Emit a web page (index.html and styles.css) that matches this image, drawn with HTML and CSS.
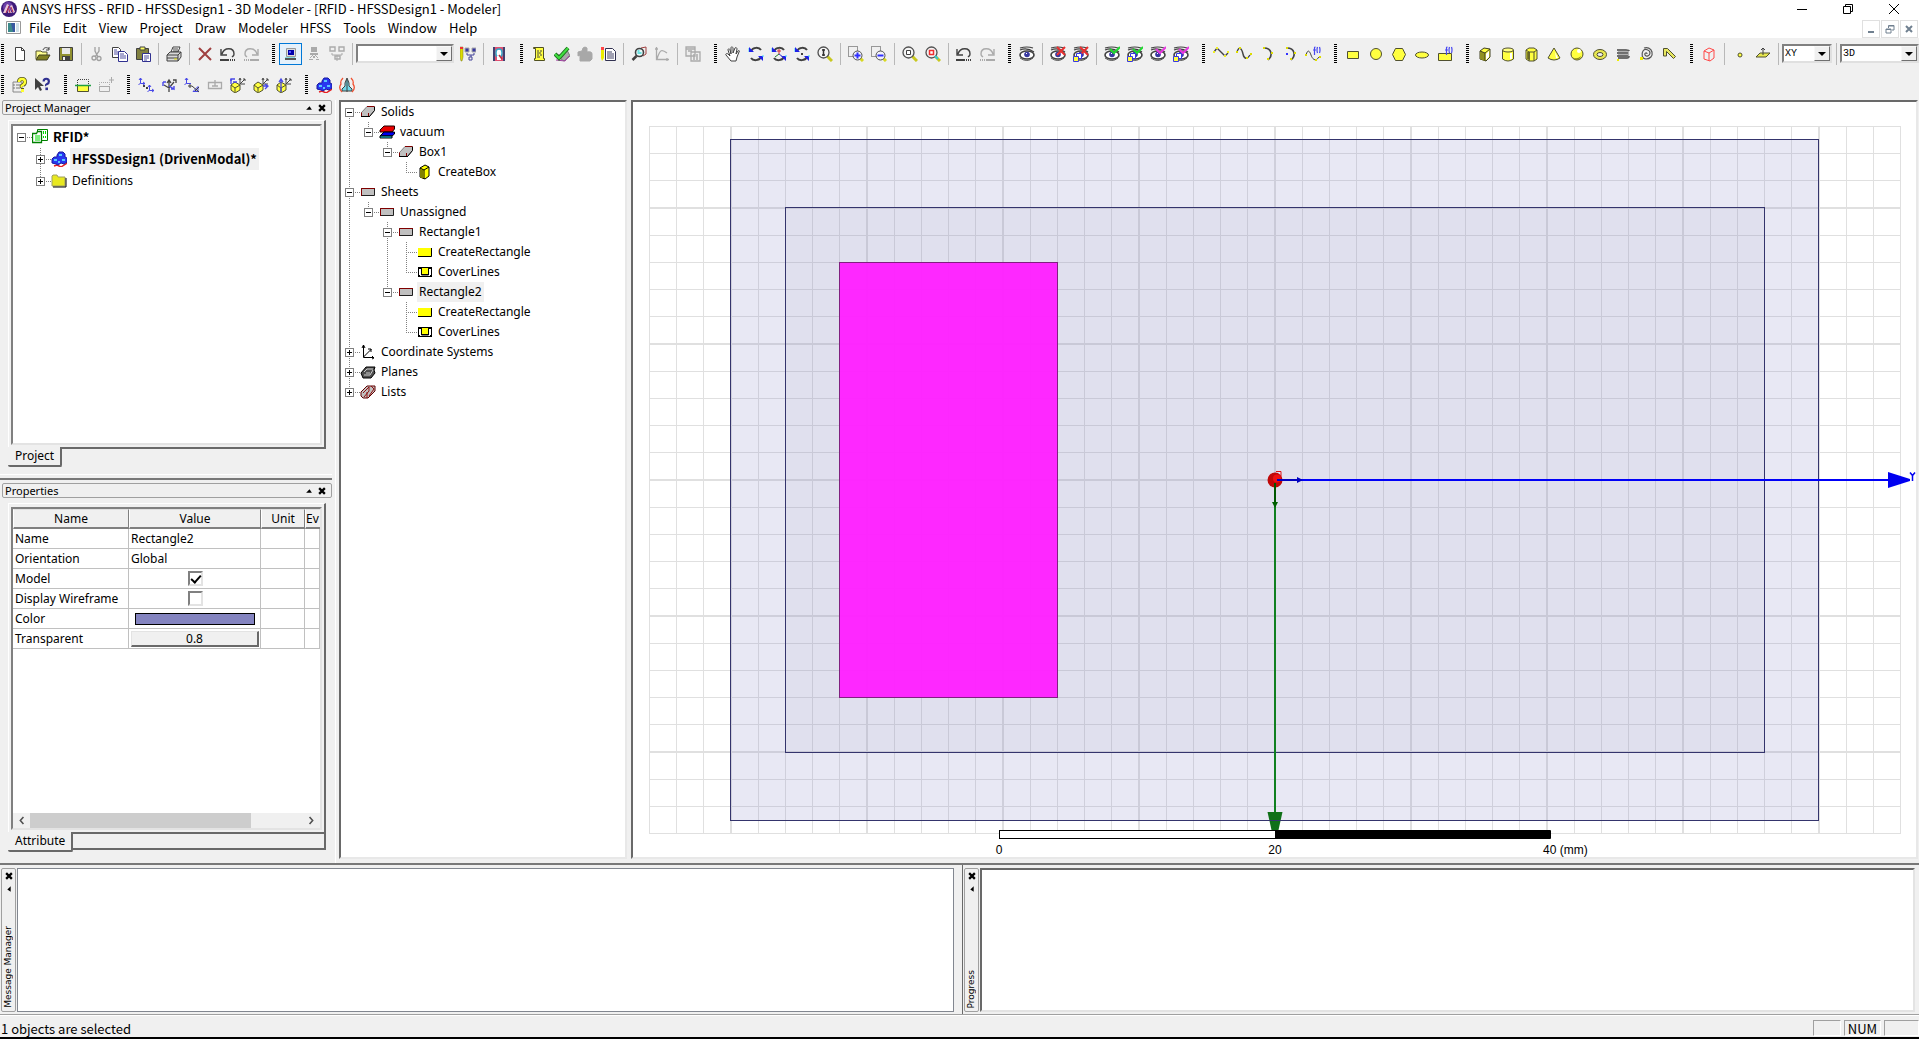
FILE: index.html
```html
<!DOCTYPE html>
<html lang="en">
<head>
<meta charset="utf-8">
<title>ANSYS HFSS - RFID - HFSSDesign1 - 3D Modeler</title>
<link rel="stylesheet" href="styles.css">
</head>
<body>
<svg class="defs" aria-hidden="true">
  <symbol id="logo" viewBox="0 0 16 16"><circle cx="8" cy="8" r="8" fill="#3d1a78"/><circle cx="7" cy="6" r="5" fill="#6b3fa8"/><path d="M2 12 6 3l2 1-3 8zM7 12l1-5 3 5zM9 5l2-1 3 7-2 1z" fill="#e8c8d8"/><path d="M5 12 8 5M9 12 8 8M12 11 10 6" stroke="#b02848" fill="none"/></symbol>
  <symbol id="doc" viewBox="0 0 16 14"><path d="M.5.5h14v12H.5z" fill="#fff" stroke="#999"/><path d="M2 2h7v9H2z" fill="#3c8a8a"/><path d="M5 2h4v9H7z" fill="#3858a0"/><path d="M10 2h3v9h-3z" fill="#cfe0e8"/></symbol>
  <symbol id="new" viewBox="0 0 16 16"><path d="M3.5 1.5h6l3 3v10h-9z" fill="#fff" stroke="#404040"/><path d="M9.500 1.500v3h3" fill="none" stroke="#404040"/></symbol>
  <symbol id="open" viewBox="0 0 16 16"><path d="M1 13V5h5l1 1h5v3" fill="#ffff90" stroke="#505030"/><path d="m1 14 3-5h11l-3 5z" fill="#808020" stroke="#404020"/><path d="M8 4c1-3 4-3 6-1m0-2v3h-3" fill="none" stroke="#404040"/></symbol>
  <symbol id="save" viewBox="0 0 16 16"><path d="M1.500 1.500h13v13h-13z" fill="#909030" stroke="#404040"/><path d="M4 2h8v6H4z" fill="#e8e8e8"/><path d="M4 10h8v4H4z" fill="#404040"/><path d="M5 11h2v3H5z" fill="#eee"/></symbol>
  <symbol id="cut" viewBox="0 0 16 16"><g fill="none" stroke="#a0a0a0" stroke-width="1.300"><path d="M6 1v4l3 6M10 1v4l-4 6"/><circle cx="5" cy="12" r="2"/><circle cx="10" cy="12.500" r="2"/></g></symbol>
  <symbol id="copy" viewBox="0 0 16 16"><path d="M.5 1.500h6l2 2v8h-8z" fill="#fff" stroke="#404040"/><path d="M6.500 5.500h6l3 3v7h-9z" fill="#fff" stroke="#303090"/><path d="M2 4h3M2 6h4M2 8h4M8 8h4M8 10h6M8 12h6" stroke="#5050a0"/></symbol>
  <symbol id="paste" viewBox="0 0 16 16"><path d="M1.500 2.500h12v11h-12z" fill="#808040" stroke="#404040"/><path d="M5 1h5v3H5z" fill="#ffff60" stroke="#404040"/><path d="M7.500 7.500h8v8h-8z" fill="#fff" stroke="#303090"/><path d="M9 10h5M9 12h5M9 14h3" stroke="#5050a0"/></symbol>
  <symbol id="print" viewBox="0 0 16 16"><path d="M5 6 7 1h7l-2 5z" fill="#fff" stroke="#404040"/><path d="m1 9 3-3h11v5l-3 4H1z" fill="#d8d8d8" stroke="#404040"/><path d="M1 9h11v6M12 9l3-3M1 12h11M7 3h5M7 5h5" fill="none" stroke="#404040"/><path d="M8 13h3" stroke="#dd0"/></symbol>
  <symbol id="delete" viewBox="0 0 16 16"><path d="M2 2 14 14M14 2 2 14" stroke="#a04040" stroke-width="2"/></symbol>
  <symbol id="undo" viewBox="0 0 16 16"><path d="M2 8c2-7 12-7 12 0 0 2-1 2-2 3M1 3v6h6" fill="none" stroke="currentColor" stroke-width="1.400"/><path d="M0 14h9m1 0h1m1 0h1m1 0h1" stroke="currentColor" stroke-width="2"/></symbol>
  <symbol id="redo" viewBox="0 0 16 16"><g transform="matrix(-1 0 0 1 16 0)"><use href="#undo" width="16" height="16"/></g></symbol>
  <symbol id="pc" viewBox="0 0 16 16"><path d="M3.500 2.500h9v8h-9z" fill="#ddd" stroke="#999"/><path d="M5 4h6v5H5z" fill="#00a"/><path d="M6 5h2v2H6z" fill="#55f"/><path d="M2 12h11v2H2z" fill="#555"/><path d="M2 11h10v1H2z" fill="#8dd"/></symbol>
  <symbol id="remote" viewBox="0 0 16 16"><path d="M5 1h6v5H5zM4 7h8v2H4zM7 10h2v2H7zM3 13h4v1H3zM10 13h3v1h-3z" fill="#aaa"/><path d="m4 12 3-3m5 3-3-3" stroke="#aaa"/></symbol>
  <symbol id="dist" viewBox="0 0 16 16"><path d="M1 1h5v4H1zM10 1h5v4h-5zM6 10h5v3H6z" fill="none" stroke="currentColor" stroke-width="1.400"/><path d="M3 7v2h10V7M8 9v6" fill="none" stroke="currentColor"/></symbol>
  <symbol id="distedit" viewBox="0 0 16 16"><path d="M0 1h3v10l-1 4H1l-1-4z" fill="#dd0" stroke="#772" stroke-width=".5"/><path d="M0 1h3v2H0z" fill="#e33"/><path d="M5 2h4v4H5zM12 2h4v4h-4z" fill="#3838a0" stroke="#aaa"/><path d="M7 7v2h7V7m-3 2v2M9 11h3v3H9z" fill="none" stroke="#449"/></symbol>
  <symbol id="queue" viewBox="0 0 16 16"><path d="M2 1h12v14H2z" fill="#404070"/><path d="M4 1h8v14H4z" fill="#e05070"/><rect x="5" y="3" width="6" height="8" rx="3" fill="#fff" stroke="#30a8c8" stroke-width="1.500"/><path d="M6 10h4v4H6z" fill="#fff"/><path d="m8 9 3 4" stroke="#c03040" stroke-width="1.500"/></symbol>
  <symbol id="script" viewBox="0 0 16 16"><path d="M2.500 1.500h10v11h1v2h-10v-2h1v-10h-2z" fill="#ffff40" stroke="#505020"/><path d="M6 5h2m1 0h2M6 7h4M6 9h2m1 0h2M6 11h3" stroke="#444"/></symbol>
  <symbol id="check" viewBox="0 0 16 16"><path d="m1 9 5 0 7-5 3 6-6 5z" fill="#aaa" stroke="#777"/><path d="m2 14 9 1 4-5" stroke="#a040a0" fill="none"/><path d="m1 8 4 4L14 2" fill="none" stroke="#207020" stroke-width="4"/><path d="m1 8 4 4L14 2" fill="none" stroke="#40e040" stroke-width="2"/></symbol>
  <symbol id="analyze" viewBox="0 0 16 16"><path d="M6 2q2-2 4 0v4q5-1 5 2v5l-2 2H3V9l-2 1V6l4-1z" fill="#a8a8a8" stroke="#a8a8a8" stroke-linejoin="round"/></symbol>
  <symbol id="notes" viewBox="0 0 16 16"><path d="M5.500 2.500h7l3 3v9h-10z" fill="#fff" stroke="#303050"/><path d="M7 6h5M7 8h7M7 10h7M7 12h7" stroke="#446"/><path d="M1 1h3v11l-2 3-1-3z" fill="#ee0"/><path d="M1 1h3v3H1z" fill="#f44"/></symbol>
  <symbol id="find" viewBox="0 0 16 16"><path d="m10 2 5-1v7l-3 2" fill="none" stroke="#a04040"/><circle cx="8.500" cy="6.500" r="4" fill="#e8f8f8" stroke="#404040" stroke-width="1.600"/><path d="m5.500 10-4 4" stroke="#404040" stroke-width="2.500"/><path d="M6.500 5h2M6.500 7h4" stroke="#40d8d8" stroke-width="1.500"/></symbol>
  <symbol id="plot" viewBox="0 0 16 16"><path d="M2.500 1v12.500H15M3 13c3-10 5-10 10-6M1 3h3M13 12v3" fill="none" stroke="#aaa" stroke-width="1.300"/></symbol>
  <symbol id="report" viewBox="0 0 16 16"><g fill="#eee" stroke="#aaa" stroke-width="1.300"><path d="M1 1h9v9H1zM6 6h9v9H6z"/><path d="M1 3h9M3 5h4M8 9h2m1 0h2M8 11h2m1 0h2M8 13h2m1 0h2"/></g></symbol>
  <symbol id="hand" viewBox="0 0 16 16"><path d="M6 15 1 9c-1-1 1-2 2-1l2 2-2-6c0-2 2-1 2 0l1 4V2c0-2 2-1 2 0v5l2-5c1-1 2 0 2 1l-1 5 2-3c1-1 2 0 1 1l-2 5-1 4z" fill="#fff" stroke="#404040"/></symbol>
  <symbol id="rot" viewBox="0 0 16 16"><path d="M3 5c2-4 8-4 10-1M13 11c-2 4-8 4-10 1" fill="none" stroke="#404040" stroke-width="2"/><path d="M1 1v5h5zM15 15v-5h-5z" fill="#2020e8"/><path d="M0 2v4M15 9v2" stroke="#40d8f8"/></symbol>
  <symbol id="rotaxis" viewBox="0 0 16 16"><use href="#rot" width="16" height="16"/><path d="M8 3v5M6 5h4" stroke="#d03030"/><path d="m8 8 4 3" stroke="#3030d0"/><path d="m8 8-4 3" stroke="#208020"/></symbol>
  <symbol id="rotdot" viewBox="0 0 16 16"><use href="#rot" width="16" height="16"/><path d="M7 7h2v2H7z" fill="#404040"/></symbol>
  <symbol id="lens" viewBox="0 0 16 16"><path d="m10 10 5 5" stroke="#c8c820" stroke-width="3"/><circle cx="6.500" cy="6.500" r="5.500" fill="#f4f4f4" stroke="#505050" stroke-width="1.300"/></symbol>
  <symbol id="zoomdyn" viewBox="0 0 16 16"><use href="#lens" width="16" height="16"/><path d="M6.500 3v7M5 4h3M5 9h3" stroke="#333" stroke-width="1.500"/></symbol>
  <symbol id="lensbox" viewBox="0 0 16 16"><path d="M.5.500h9v10h-9z" fill="none" stroke="#404040" stroke-dasharray="1 1"/><path d="m12 12 3 3" stroke="#d8d820" stroke-width="3"/><circle cx="9.500" cy="9.500" r="4.500" fill="#f0f0f8" stroke="#505050"/></symbol>
  <symbol id="zoomin" viewBox="0 0 16 16"><use href="#lensbox" width="16" height="16"/><path d="M6.500 9.500h6m-3-3v6" stroke="#3030ff" stroke-width="2"/></symbol>
  <symbol id="zoomout" viewBox="0 0 16 16"><use href="#lensbox" width="16" height="16"/><path d="M6.500 9.500h6" stroke="#3030ff" stroke-width="2"/></symbol>
  <symbol id="fitall" viewBox="0 0 16 16"><use href="#lens" width="16" height="16"/><path d="M4.500 4.500h4v4h-4z" fill="#fff" stroke="#404040"/></symbol>
  <symbol id="fitsel" viewBox="0 0 16 16"><use href="#lens" width="16" height="16"/><path d="M4.500 4.500h4v4h-4z" fill="#fff" stroke="#f03030" stroke-width="1.500"/><path d="m10 10 3 3" stroke="#30c8d8" stroke-width="2"/></symbol>
  <symbol id="eye" viewBox="0 0 16 16"><path d="M1 2q7-2 13 0M1 4q7-3 14 2" fill="none" stroke="#404040" stroke-width="1.200"/><ellipse cx="8" cy="9" rx="7" ry="4" fill="#fff" stroke="#404040" stroke-width="1.600"/><path d="M1 12q7 5 13 0" fill="none" stroke="#555"/><circle cx="8" cy="8.500" r="2.800" fill="#3838a0"/><path d="M7 7h1v1H7z" fill="#fff"/></symbol>
  <symbol id="boxes" viewBox="0 0 16 16"><path d="M3.500 7.500h5v5h-5z" fill="#fff" stroke="#3838e0"/><path d="M.5 10.500h5v5h-5z" fill="#ffff40" stroke="#3838e0"/></symbol>
  <symbol id="hide" viewBox="0 0 16 16"><use href="#eye" width="16" height="16"/><path d="m7 1 8 8m0-8L7 9" stroke="#e83030" stroke-width="2"/></symbol>
  <symbol id="hideb" viewBox="0 0 16 16"><use href="#hide" width="16" height="16"/><use href="#boxes" width="16" height="16"/></symbol>
  <symbol id="show" viewBox="0 0 16 16"><use href="#eye" width="16" height="16"/><path d="m6 3 4 4 6-6" fill="none" stroke="currentColor" stroke-width="2"/></symbol>
  <symbol id="showb" viewBox="0 0 16 16"><use href="#show" width="16" height="16"/><use href="#boxes" width="16" height="16"/></symbol>
  <symbol id="line" viewBox="0 0 16 16"><path d="M1 6 4 2l8 8 3-3" fill="none" stroke="#444" stroke-width="1.400"/><path d="M0 5h2v2H0zM3 1h2v2H3zM11 9h2v2h-2zM14 5h2v2h-2z" fill="#ee2"/></symbol>
  <symbol id="spline" viewBox="0 0 16 16"><path d="M1 6c2-7 5-3 6 2s4 6 7 1" fill="none" stroke="#444" stroke-width="1.400"/><path d="M0 5h2v2H0zM3 1h2v2H3zM10 11h2v2h-2zM14 7h2v2h-2z" fill="#dd0"/></symbol>
  <symbol id="arc3" viewBox="0 0 16 16"><path d="M5 2c8 0 9 8 4 12" fill="none" stroke="#444" stroke-width="1.600"/><path d="M4 1h2v2H4zM12 6h2v2h-2zM8 12h2v2H8z" fill="#dd0"/></symbol>
  <symbol id="arcc" viewBox="0 0 16 16"><use href="#arc3" width="16" height="16"/><path d="M4 7h2v2H4z" fill="#33f"/></symbol>
  <symbol id="fx" viewBox="0 0 16 16"><path d="M9.500 9V2q0-1 1-1M8 4h3M12.500 1q-1 3 0 6m2-6q1 3 0 6" fill="none" stroke="#4848f0" stroke-width="1.200"/></symbol>
  <symbol id="eqcurve" viewBox="0 0 16 16"><path d="M1 9c2-7 4-3 5 0s4 8 8 2" fill="none" stroke="#444"/><path d="M0 8h2v2H0zM10 13h2v2h-2zM14 10h2v2h-2z" fill="#dd0"/><use href="#fx" width="16" height="16"/></symbol>
  <symbol id="srect" viewBox="0 0 16 16"><path d="M2.500 5.500h11v7h-11z" fill="#ffff40" stroke="#505030"/></symbol>
  <symbol id="scirc" viewBox="0 0 16 16"><circle cx="8" cy="8" r="5.500" fill="#ffff40" stroke="#505030"/></symbol>
  <symbol id="spoly" viewBox="0 0 16 16"><path d="m1.500 8.500 3-6h7l3 6-3 6h-7z" fill="#ffff40" stroke="#505030"/></symbol>
  <symbol id="sell" viewBox="0 0 16 16"><ellipse cx="8" cy="9" rx="6.500" ry="3" fill="#ffff40" stroke="#505030"/></symbol>
  <symbol id="eqsurf" viewBox="0 0 16 16"><path d="M1.500 7.500h13v7h-13z" fill="#ffff40" stroke="#505030"/><use href="#fx" width="16" height="16"/></symbol>
  <symbol id="box" viewBox="0 0 16 16"><path d="m3 5 4-3 6 1v8l-4 4-6-2z" fill="#ffff40" stroke="#404020"/><path d="m3 5 5 2v8L3 13z" fill="#909020"/><path d="m3 5 5 2 5-4M8 7v8" fill="none" stroke="#404020"/><path d="m9 8 3-3v6l-3 3z" fill="#fff"/></symbol>
  <symbol id="cbox" viewBox="0 0 16 16"><path d="m3 4 5-3 4 2v9l-4 3-5-2z" fill="#ff0" stroke="#000"/><path d="m3 5 3 1v9l-3-2z" fill="#808000"/><path d="m3 4 4 2 5-3M7 6v9" fill="none" stroke="#000"/></symbol>
  <symbol id="cyl" viewBox="0 0 16 16"><path d="M2.500 4v9q5.500 4 11 0V4" fill="#ffff40" stroke="#505030"/><ellipse cx="8" cy="4" rx="5.500" ry="2" fill="#ffff80" stroke="#505030"/><path d="M10 7h2v6h-2z" fill="#fff"/></symbol>
  <symbol id="prism" viewBox="0 0 16 16"><path d="m3 4 3-2h5l3 2v9l-3 2H6l-3-2z" fill="#ffff40" stroke="#505030"/><path d="M4 6h3v8l-3-1z" fill="#808020"/><path d="m3 4 3 2h5l3-2M6 6v9m5-9v9" fill="none" stroke="#505030"/></symbol>
  <symbol id="cone" viewBox="0 0 16 16"><path d="m8 2 6 10q-6 4-12 0z" fill="#ffff40" stroke="#505030"/><path d="m9 6 3 6h-2z" fill="#fff"/></symbol>
  <symbol id="sphere" viewBox="0 0 16 16"><circle cx="8" cy="8" r="6" fill="#ffff40" stroke="#505030"/><path d="M3 11q5 3 9-1-1 4-5 4z" fill="#909020"/><circle cx="10" cy="5" r="2" fill="#fff"/></symbol>
  <symbol id="torus" viewBox="0 0 16 16"><ellipse cx="8" cy="8.500" rx="6.500" ry="5" fill="#e8e850" stroke="#505030"/><ellipse cx="8" cy="8.500" rx="3" ry="2" fill="#f0f0f0" stroke="#505030"/></symbol>
  <symbol id="helix" viewBox="0 0 16 16"><path d="M2 4h9q3 0 3 1M2 7h11M2 10h11M3 12h9q2 0 2-2" fill="none" stroke="#444" stroke-width="1.500"/><path d="M13 4v8M3 5h9M3 8h9" stroke="#777"/><path d="M2 13h2v2H2z" fill="#ee0"/></symbol>
  <symbol id="spiral" viewBox="0 0 16 16"><path d="M9 8c0-2-3-1-2 1s5 1 5-2-5-5-7-2-1 8 3 8 7-3 6-7-5-5-8-4" fill="none" stroke="#555" stroke-width="1.200"/><path d="M2 11h3v3H2z" fill="#ee0"/></symbol>
  <symbol id="sweep" viewBox="0 0 16 16"><path d="M2.500 10V2.500h4l8 8-2 2-7-7V10z" fill="#e8e860" stroke="#505030"/></symbol>
  <symbol id="region" viewBox="0 0 16 16"><path d="m3 5 5-3 5 2v8l-4 3-6-2zM3 5l5 2 5-3M8 7v8" fill="none" stroke="#ff4848"/></symbol>
  <symbol id="point" viewBox="0 0 16 16"><circle cx="8" cy="9" r="2" fill="#ffff40" stroke="#505030"/></symbol>
  <symbol id="plane" viewBox="0 0 16 16"><path d="m1 11 4-4h10l-4 4z" fill="#e8e850" stroke="#505030"/><path d="M8 9V2M6 4l2-2 2 2" fill="none" stroke="#404040"/></symbol>
  <symbol id="q" viewBox="0 0 16 16"><path d="M7 5q0-3 3-3t3 3q0 2-2 3t-1 2" fill="none" stroke="currentColor" stroke-width="2.500"/><path d="M9 12h3v3H9z" fill="currentColor"/></symbol>
  <symbol id="help" viewBox="0 0 16 16"><path d="M1 5h9v10H1z" fill="#eee" stroke="#888"/><path d="M1 8h2M1 11h2M4 8h4m-4 3h4" stroke="#777"/><path d="M7 5q0-3 3-3t3 3q0 2-2 3t-1 2M9 13h3" fill="none" stroke="#555520" stroke-width="4"/><g color="#ffff30"><use href="#q" width="16" height="16"/></g></symbol>
  <symbol id="what" viewBox="0 0 16 16"><path d="M0 1v12l3-3 2 4 2-1-2-4h4z" fill="#404040"/><g color="#303090"><use href="#q" x="2" width="15" height="14"/></g></symbol>
  <symbol id="sec" viewBox="0 0 16 16"><path d="M2.500 8V2.500h11V8" fill="none" stroke="#404040" stroke-dasharray="1 1"/><path d="M2.500 8.500h11v6h-11z" fill="#ffff40" stroke="#505030"/><path d="M0 8.500h16" stroke="#20a040" stroke-width="1.500"/></symbol>
  <symbol id="secoff" viewBox="0 0 16 16"><path d="M1.500 10V5.500h10V10" fill="none" stroke="#aaa" stroke-dasharray="1 1"/><path d="M1.500 9.500h10v5h-10zM11 3h5m-2.500-3v6" fill="none" stroke="#aaa"/></symbol>
  <symbol id="cs1" viewBox="0 0 16 16"><path d="M2.500 1v5.500H7M2.500 6.500l-2 1M11.500 8v5.500H16m-4.500 0-2 1M1 3l1.500-2L4 3m1 2 2 1.500L5 8m5 2 1.500-2 1.500 2m1 2 2 1.500-2 1.500" fill="none" stroke="#4848e8"/><path d="M5 8h2v2H5zM8 10h2v2H8z" fill="#404040"/></symbol>
  <symbol id="cs2" viewBox="0 0 16 16"><path d="M8 15V4M3 8l5 3 5-6M6 6l2-3 2 3M12 3h3v3" fill="none" stroke="#444" stroke-width="1.300"/><path d="M2 5h3m-3 0v4M8 9l5 3v-3m0 3h-3" fill="none" stroke="#4848e8" stroke-width="1.400"/></symbol>
  <symbol id="cs3" viewBox="0 0 16 16"><path d="M2.500 1v5.500H7M.5 7.500l2-1M1 3l1.500-2L4 3M9 14.500l5-5v5z" fill="none" stroke="#4848e8"/><path d="M5 8h2v2H5zM8 9l7 6m0-5-4 4" fill="none" stroke="#404040"/></symbol>
  <symbol id="cs4" viewBox="0 0 16 16"><path d="M1.500 5.500h13v6h-13zM8 3v6M5 9h6" fill="none" stroke="#aaa" stroke-width="1.300"/></symbol>
  <symbol id="csf" viewBox="0 0 16 16"><path d="m1 8 4-3 5 3v5l-5 3-4-3z" fill="#ffff40" stroke="#505030"/><path d="m1 8 4 3 5-3M5 11v4" fill="none" stroke="#505030"/><path d="M10 7V2m0 5h5m-5 0 5-5M9 3l1-2 1 2m2-1h2v2" fill="none" stroke="#444"/></symbol>
  <symbol id="csf1" viewBox="0 0 16 16"><use href="#csf" width="16" height="16"/><path d="M1 7V2h4M0 3h2m1 2h4" fill="none" stroke="#4848e8" stroke-width="1.300"/></symbol>
  <symbol id="csf2" viewBox="0 0 16 16"><use href="#csf" width="16" height="16"/><path d="M10 9h5m-3-2 3 2-3 3" fill="none" stroke="#4848e8" stroke-width="1.300"/></symbol>
  <symbol id="csf3" viewBox="0 0 16 16"><use href="#csf" width="16" height="16"/><path d="M5 15V3M3 5l2-3 2 3" fill="none" stroke="#4848e8" stroke-width="1.300"/></symbol>
  <symbol id="hfss" viewBox="0 0 16 16"><path d="m3 15 3-1 4 2 6-4V7" fill="none" stroke="#e82020" stroke-width="1.500"/><path d="m6 4 2-3h4l2 2v3l2 1v4l-3 2-3-1-3 2-2-1-4-1V8l2-2h3z" fill="#2838f0" stroke="#1818a0"/><path d="M8 3h3v2H8zM3 8h3v2H3zM11 8h3v2h-3zM7 10h2v2H7z" fill="#58c8ff"/></symbol>
  <symbol id="antenna" viewBox="0 0 16 16"><path d="m8 1 2 5v3l3 3v2H3v-2l3-3V6z" fill="#70d8e8" stroke="#404040"/><path d="M8 3v12" stroke="#404040"/><path d="M4 1Q1 4 2 7q-3 4 1 8M12 1q3 3 2 6 3 4-1 8" fill="none" stroke="#f05030" stroke-width="1.300"/></symbol>
  <symbol id="proj" viewBox="0 0 16 16"><path d="M5.500.500h10v11h-10z" fill="#fff" stroke="#008000"/><path d="M.5 4.500h4l1-2h4v11h-9z" fill="#fff" stroke="#008000" stroke-width="1.300"/><path d="M11.500 2v3m2-3v3m-2 2v2m2-2v2M3 7h5M3 9h5M3 11h5" stroke="#0d0"/></symbol>
  <symbol id="folder" viewBox="0 0 16 16"><path d="M1 13V3l1-1h4l1 2h7v9z" fill="#e8e820" stroke="#a0a060"/><path d="M2 14h13V5" fill="none" stroke="#000"/></symbol>
  <symbol id="solid" viewBox="0 0 16 16"><path d="M1.500 8.500 7 2.500h7.500v4l-5 6h-8z" fill="#c0c0c0" stroke="#808080"/><path d="M7 2.500h7.500M8.500 12V9M1.500 12V8.500" fill="none" stroke="#800000"/><path d="m9.500 12.500 5-6V3M1 12.500h9" fill="none" stroke="#000"/></symbol>
  <symbol id="mat" viewBox="0 0 16 16"><path d="m1 6 4-4h10.500v3L13 8H1z" fill="#e80000" stroke="#200000"/><path d="m1 12 4-4h10.500v2L13 12z" fill="#0000f0" stroke="#000"/><path d="M1 12h12v2H1z" fill="#20e0f0" stroke="#000"/></symbol>
  <symbol id="sheet" viewBox="0 0 16 16"><path d="M1.500 4.500h13v7h-13z" fill="#c0c0c0" stroke="#202020"/><path d="M1.500 12V4.500H15" fill="none" stroke="#800000"/></symbol>
  <symbol id="crect" viewBox="0 0 16 16"><path d="M1 4h13v8H1z" fill="#ff0"/><path d="M1 12.500h13.500V4" fill="none" stroke="#000"/></symbol>
  <symbol id="cover" viewBox="0 0 16 16"><path d="M1 3h14v10H1z"/><path d="M2 5h2v6H2zM12 5h2v6h-2zM3 11h10v1H3z" fill="#fff"/><path d="M4 4h8v6H4z" fill="#ff0"/><path d="M4.500 4v7h7V4" fill="none" stroke="#000"/></symbol>
  <symbol id="axes" viewBox="0 0 16 16"><path d="M3.500 1v12.500H14M3.500 13l8-8M2 4l1.500-3L5 4m3 1h3v3m1 4 2 2-2 1" fill="none" stroke="#000"/></symbol>
  <symbol id="planes" viewBox="0 0 16 16"><path d="m1 9 5-6h9l-1 3 1 3-4 5H3z" fill="#505050" stroke="#000"/><path d="m4 8 3-3h6M4 11h6l3-5M6 9h4" stroke="#ccc" fill="none"/></symbol>
  <symbol id="lists" viewBox="0 0 16 16"><path d="m1 8 6-6h8v5l-7 7H3l-2-2z" fill="#c0c0c0" stroke="#600000"/><path d="m3 9 6-6v4L4 13m5-1 5-7-3-3M7 8v6" fill="none" stroke="#901010"/></symbol>
</svg>

<header class="titlebar">
  <svg class="logo"><use href="#logo"/></svg>
  <h1>ANSYS HFSS - RFID - HFSSDesign1 - 3D Modeler - [RFID - HFSSDesign1 - Modeler]</h1>
  <div class="winbtns">
    <button aria-label="Minimize"><svg viewBox="0 0 12 12"><path d="M1 6.500h10"/></svg></button>
    <button aria-label="Restore"><svg viewBox="0 0 12 12"><path d="M1.500 3.500h7v7h-7zM3.500 3.500v-2h7v7h-2"/></svg></button>
    <button aria-label="Close"><svg viewBox="0 0 12 12"><path d="m1 1 10 10M11 1 1 11"/></svg></button>
  </div>
</header>
<nav class="menubar">
  <svg class="docicon"><use href="#doc"/></svg>
  <button>File</button><button>Edit</button><button>View</button><button>Project</button><button>Draw</button><button>Modeler</button><button>HFSS</button><button>Tools</button><button>Window</button><button>Help</button>
  <div class="mdibtns">
    <button aria-label="Minimize document"><svg viewBox="0 0 10 10"><path d="M2 8h6" stroke-width="2"/></svg></button>
    <button aria-label="Restore document"><svg viewBox="0 0 10 10"><path d="M1 5h5v4H1zM1 5.500h5M3.500 4V1.500H9V6H7M4 2h5"/></svg></button>
    <button aria-label="Close document"><svg viewBox="0 0 10 10"><path d="m2 2 6 6m0-6L2 8" stroke-width="2"/></svg></button>
  </div>
</nav>
<div class="toolbar">
  <div class="group">
    <button class="tb" aria-label="New"><svg><use href="#new"/></svg></button><button class="tb" aria-label="Open"><svg><use href="#open"/></svg></button><button class="tb" aria-label="Save"><svg><use href="#save"/></svg></button><i class="sep"></i><button class="tb" aria-label="Cut"><svg><use href="#cut"/></svg></button><button class="tb" aria-label="Copy"><svg><use href="#copy"/></svg></button><button class="tb" aria-label="Paste"><svg><use href="#paste"/></svg></button><i class="sep"></i><button class="tb" aria-label="Print"><svg><use href="#print"/></svg></button><i class="sep"></i><button class="tb" aria-label="Delete"><svg><use href="#delete"/></svg></button><button class="tb" aria-label="Undo"><svg><use href="#undo"/></svg></button><button class="tb off" aria-label="Redo"><svg><use href="#redo"/></svg></button>
  </div>
  <div class="group">
    <button class="tb on" aria-label="Local machine"><svg><use href="#pc"/></svg></button><button class="tb" aria-label="Remote machine"><svg><use href="#remote"/></svg></button><button class="tb off" aria-label="Distributed"><svg><use href="#dist"/></svg></button><i class="sep"></i><span class="combo wide"><select aria-label="Machine list"><option></option></select><span class="arrow"></span></span><button class="tb" aria-label="Edit machine list"><svg><use href="#distedit"/></svg></button><i class="sep"></i><button class="tb" aria-label="Queue"><svg><use href="#queue"/></svg></button>
  </div>
  <div class="group">
    <button class="tb" aria-label="Edit notes"><svg><use href="#script"/></svg></button><button class="tb" aria-label="Validate"><svg><use href="#check"/></svg></button><button class="tb" aria-label="Analyze all"><svg><use href="#analyze"/></svg></button><button class="tb" aria-label="Edit sources"><svg><use href="#notes"/></svg></button><i class="sep"></i><button class="tb" aria-label="Solution data"><svg><use href="#find"/></svg></button><button class="tb" aria-label="Create report"><svg><use href="#plot"/></svg></button><i class="sep"></i><button class="tb" aria-label="Copy report"><svg><use href="#report"/></svg></button>
  </div>
  <div class="group">
    <button class="tb" aria-label="Pan"><svg><use href="#hand"/></svg></button><button class="tb" aria-label="Rotate"><svg><use href="#rot"/></svg></button><button class="tb" aria-label="Rotate about axis"><svg><use href="#rotaxis"/></svg></button><button class="tb" aria-label="Rotate about screen centre"><svg><use href="#rotdot"/></svg></button><button class="tb" aria-label="Zoom"><svg><use href="#zoomdyn"/></svg></button><i class="sep"></i><button class="tb" aria-label="Zoom in"><svg><use href="#zoomin"/></svg></button><button class="tb" aria-label="Zoom out"><svg><use href="#zoomout"/></svg></button><i class="sep"></i><button class="tb" aria-label="Fit all"><svg><use href="#fitall"/></svg></button><button class="tb" aria-label="Fit selection"><svg><use href="#fitsel"/></svg></button><i class="sep"></i><button class="tb" aria-label="Previous view"><svg><use href="#undo"/></svg></button><button class="tb off" aria-label="Next view"><svg><use href="#redo"/></svg></button>
  </div>
  <div class="group">
    <button class="tb" aria-label="Visibility"><svg><use href="#eye"/></svg></button><i class="sep"></i><button class="tb" aria-label="Hide selection"><svg><use href="#hide"/></svg></button><button class="tb" aria-label="Hide selection in active view"><svg><use href="#hideb"/></svg></button><i class="sep"></i><button class="tb green" aria-label="Show selection"><svg><use href="#show"/></svg></button><button class="tb green" aria-label="Show selection in active view"><svg><use href="#showb"/></svg></button><button class="tb pink" aria-label="Show all"><svg><use href="#show"/></svg></button><button class="tb pink" aria-label="Show all in active view"><svg><use href="#showb"/></svg></button>
  </div>
  <div class="group">
    <button class="tb" aria-label="Line"><svg><use href="#line"/></svg></button><button class="tb" aria-label="Spline"><svg><use href="#spline"/></svg></button><button class="tb" aria-label="Three point arc"><svg><use href="#arc3"/></svg></button><button class="tb" aria-label="Centre point arc"><svg><use href="#arcc"/></svg></button><button class="tb" aria-label="Equation curve"><svg><use href="#eqcurve"/></svg></button>
  </div>
  <div class="group">
    <button class="tb" aria-label="Rectangle"><svg><use href="#srect"/></svg></button><button class="tb" aria-label="Circle"><svg><use href="#scirc"/></svg></button><button class="tb" aria-label="Polygon"><svg><use href="#spoly"/></svg></button><button class="tb" aria-label="Ellipse"><svg><use href="#sell"/></svg></button><button class="tb" aria-label="Equation surface"><svg><use href="#eqsurf"/></svg></button>
  </div>
  <div class="group">
    <button class="tb" aria-label="Box"><svg><use href="#box"/></svg></button><button class="tb" aria-label="Cylinder"><svg><use href="#cyl"/></svg></button><button class="tb" aria-label="Polyhedron"><svg><use href="#prism"/></svg></button><button class="tb" aria-label="Cone"><svg><use href="#cone"/></svg></button><button class="tb" aria-label="Sphere"><svg><use href="#sphere"/></svg></button><button class="tb" aria-label="Torus"><svg><use href="#torus"/></svg></button><button class="tb" aria-label="Helix"><svg><use href="#helix"/></svg></button><button class="tb" aria-label="Spiral"><svg><use href="#spiral"/></svg></button><button class="tb" aria-label="Bondwire"><svg><use href="#sweep"/></svg></button>
  </div>
  <div class="group">
    <button class="tb" aria-label="Region"><svg><use href="#region"/></svg></button><i class="sep"></i><button class="tb" aria-label="Point"><svg><use href="#point"/></svg></button><button class="tb" aria-label="Plane"><svg><use href="#plane"/></svg></button><i class="sep"></i><span class="combo"><select aria-label="Drawing plane"><option>XY</option></select><span class="arrow"></span></span><i class="sep"></i><span class="combo mode"><select aria-label="Movement mode"><option>3D</option></select><span class="arrow"></span></span>
  </div>
</div>
<div class="toolbar">
  <div class="group">
    <button class="tb" aria-label="Help topics"><svg><use href="#help"/></svg></button><button class="tb" aria-label="Context help"><svg><use href="#what"/></svg></button>
  </div>
  <div class="group">
    <button class="tb" aria-label="Section"><svg><use href="#sec"/></svg></button><button class="tb" aria-label="Add section"><svg><use href="#secoff"/></svg></button>
  </div>
  <div class="group">
    <button class="tb" aria-label="Offset coordinate system"><svg><use href="#cs1"/></svg></button><button class="tb" aria-label="Rotated coordinate system"><svg><use href="#cs2"/></svg></button><button class="tb" aria-label="Offset and rotated"><svg><use href="#cs3"/></svg></button><button class="tb" aria-label="Object coordinate system"><svg><use href="#cs4"/></svg></button><button class="tb" aria-label="Face offset"><svg><use href="#csf1"/></svg></button><button class="tb" aria-label="Face rotated"><svg><use href="#csf2"/></svg></button><button class="tb" aria-label="Face both"><svg><use href="#csf3"/></svg></button>
  </div>
  <div class="group">
    <button class="tb" aria-label="Insert HFSS design"><svg><use href="#hfss"/></svg></button><button class="tb" aria-label="Insert HFSS-IE design"><svg><use href="#antenna"/></svg></button>
  </div>
</div>

<main class="work">
  <aside class="side">
    <section class="dock">
      <header class="dockhead"><h2>Project Manager</h2><button aria-label="Collapse"><svg viewBox="0 0 7 7"><path d="m1 5 3-3 2 3z"/></svg></button><button aria-label="Close"><svg viewBox="0 0 7 7"><path class="x" d="m1 1 5 5m0-5L1 6"/></svg></button></header>
      <div class="frame"><div class="well">
        <ul class="tree tall">
          <li><div class="row"><button class="exp" aria-label="Collapse"></button><svg><use href="#proj"/></svg><b>RFID*</b></div>
            <ul>
              <li><div class="row"><button class="exp plus" aria-label="Expand"></button><svg><use href="#hfss"/></svg><b class="sel">HFSSDesign1 (DrivenModal)*</b></div></li>
              <li><div class="row"><button class="exp plus" aria-label="Expand"></button><svg><use href="#folder"/></svg><span>Definitions</span></div></li>
            </ul>
          </li>
        </ul>
      </div></div>
      <div class="tabs"><button>Project</button></div>
      <div class="split"></div>
    </section>
    <section class="dock props">
      <header class="dockhead"><h2>Properties</h2><button aria-label="Collapse"><svg viewBox="0 0 7 7"><path d="m1 5 3-3 2 3z"/></svg></button><button aria-label="Close"><svg viewBox="0 0 7 7"><path class="x" d="m1 1 5 5m0-5L1 6"/></svg></button></header>
      <div class="frame"><div class="well">
        <div class="tablebox">
        <table>
          <colgroup><col class="c1"><col class="c2"><col class="c3"><col></colgroup>
          <thead><tr><th>Name</th><th>Value</th><th>Unit</th><th class="last">Ev</th></tr></thead>
          <tbody>
            <tr><td>Name</td><td>Rectangle2</td><td></td><td></td></tr>
            <tr><td>Orientation</td><td>Global</td><td></td><td></td></tr>
            <tr><td><label for="model">Model</label></td><td><input type="checkbox" id="model" checked></td><td></td><td></td></tr>
            <tr><td><label for="wire">Display Wireframe</label></td><td><input type="checkbox" id="wire"></td><td></td><td></td></tr>
            <tr><td>Color</td><td><button class="swatch" aria-label="Color"></button></td><td></td><td></td></tr>
            <tr><td>Transparent</td><td><button class="value">0.8</button></td><td></td><td></td></tr>
          </tbody>
        </table>
        </div>
        <div class="hscroll"><button aria-label="Scroll left"><svg viewBox="0 0 9 11"><path d="m7 1-4 4.500L7 10"/></svg></button><div class="track"><div class="thumb"></div></div><button aria-label="Scroll right"><svg viewBox="0 0 9 11"><path d="m2 1 4 4.500L2 10"/></svg></button></div>
      </div></div>
      <div class="tabs"><button>Attribute</button><div class="rest"></div></div>
    </section>
  </aside>
  <section class="pane model">
    <ul class="tree">
      <li><div class="row"><button class="exp" aria-label="Collapse"></button><svg><use href="#solid"/></svg><span>Solids</span></div>
        <ul><li><div class="row"><button class="exp" aria-label="Collapse"></button><svg><use href="#mat"/></svg><span>vacuum</span></div>
          <ul><li><div class="row"><button class="exp" aria-label="Collapse"></button><svg><use href="#solid"/></svg><span>Box1</span></div>
            <ul><li><div class="row leaf"><svg><use href="#cbox"/></svg><span>CreateBox</span></div></li></ul>
          </li></ul>
        </li></ul>
      </li>
      <li><div class="row"><button class="exp" aria-label="Collapse"></button><svg><use href="#sheet"/></svg><span>Sheets</span></div>
        <ul><li><div class="row"><button class="exp" aria-label="Collapse"></button><svg><use href="#sheet"/></svg><span>Unassigned</span></div>
          <ul>
            <li><div class="row"><button class="exp" aria-label="Collapse"></button><svg><use href="#sheet"/></svg><span>Rectangle1</span></div>
              <ul><li><div class="row leaf"><svg><use href="#crect"/></svg><span>CreateRectangle</span></div></li><li><div class="row leaf"><svg><use href="#cover"/></svg><span>CoverLines</span></div></li></ul>
            </li>
            <li><div class="row"><button class="exp" aria-label="Collapse"></button><svg><use href="#sheet"/></svg><span class="sel">Rectangle2</span></div>
              <ul><li><div class="row leaf"><svg><use href="#crect"/></svg><span>CreateRectangle</span></div></li><li><div class="row leaf"><svg><use href="#cover"/></svg><span>CoverLines</span></div></li></ul>
            </li>
          </ul>
        </li></ul>
      </li>
      <li><div class="row"><button class="exp plus" aria-label="Expand"></button><svg><use href="#axes"/></svg><span>Coordinate Systems</span></div></li>
      <li><div class="row"><button class="exp plus" aria-label="Expand"></button><svg><use href="#planes"/></svg><span>Planes</span></div></li>
      <li><div class="row"><button class="exp plus" aria-label="Expand"></button><svg><use href="#lists"/></svg><span>Lists</span></div></li>
    </ul>
  </section>
  <section class="pane view">
    <svg id="scene" viewBox="633 102 1283 755" preserveAspectRatio="xMidYMid meet" role="img" aria-label="Model view">
      <g id="grid" shape-rendering="crispEdges"></g>
      <g shape-rendering="crispEdges">
        <path d="M730.500 139.500h1088v681h-1088z" fill="#8484c4" fill-opacity=".19" stroke="#34346c"/>
        <path d="M785.500 207.500h979v545h-979z" fill="#8484b0" fill-opacity=".07" stroke="#34346c"/>
        <path d="M839.500 262.500h218v435h-218z" fill="#ff20ff" fill-opacity=".96" stroke="#802080"/>
        <path d="M1280 479h608v2h-608z" fill="#0000f8"/>
        <path d="M1274 484h2v328h-2z" fill="#108020"/>
      </g>
      <path d="M1888 472v16l22-7v-2z" fill="#0000f0"/>
      <path d="M1297 477v6l6-3z" fill="#0000c0"/>
      <path d="M1910 472.500l2.500 3 2.500-3M1912.500 475v6" fill="none" stroke="#0000f0" stroke-width="1.500"/>
      <path d="M1267.500 812h15l-4 18h-7z" fill="#107018"/>
      <path d="M1272 502h6l-3 6z" fill="#006000"/>
      <circle cx="1275" cy="480" r="7.500" fill="#c00808"/><circle cx="1277" cy="478.500" r="4" fill="#f01010"/>
      <path d="M1276 471.500h5v5" fill="none" stroke="#e01010"/>
      <path d="M1277 480h20" stroke="#0000c0" stroke-width="2"/>
      <path d="M1275 483v19" stroke="#005800" stroke-width="2"/>
      <path d="M1267 820.500h16" stroke="#34346c"/>
      <rect x="999.500" y="830.500" width="276" height="8" fill="#fff" stroke="#000"/>
      <rect x="1275" y="830" width="276" height="9" rx="1"/>
      <g class="scale"><text x="999" y="854" text-anchor="middle">0</text><text x="1275" y="854" text-anchor="middle">20</text><text x="1543" y="854">40 (mm)</text></g>
    </svg>
  </section>
</main>

<footer class="docks">
  <section class="strip">
    <header class="vhead"><button aria-label="Close"><svg viewBox="0 0 7 7"><path class="x" d="m1 1 5 5m0-5L1 6"/></svg></button><button aria-label="Collapse"><svg viewBox="0 0 7 7"><path d="m5 1-3 3 3 2z"/></svg></button><h2>Message Manager</h2></header>
    <div class="log thin"></div>
  </section>
  <section class="strip second">
    <header class="vhead"><button aria-label="Close"><svg viewBox="0 0 7 7"><path class="x" d="m1 1 5 5m0-5L1 6"/></svg></button><button aria-label="Collapse"><svg viewBox="0 0 7 7"><path d="m5 1-3 3 3 2z"/></svg></button><h2>Progress</h2></header>
    <div class="log"></div>
  </section>
</footer>
<div class="status"><span class="msg">1 objects are selected</span><span class="cell s1"></span><span class="cell s2">NUM</span><span class="cell s3"></span></div>
<script src="grid.js"></script>
</body>
</html>
```
FILE: styles.css
```css
* { box-sizing: border-box; }
html, body { height: 100%; }
body {
  margin: 0;
  display: flex;
  flex-direction: column;
  background: #f0f0f0;
  color: #000;
  font: 12px/20px "Noto Sans", "Noto Sans CJK SC", sans-serif;
  border-bottom: 2px solid #000;
  overflow: hidden;
}
h1, h2, ul { margin: 0; padding: 0; font-size: inherit; font-weight: normal; list-style: none; }
button, select { font: inherit; color: inherit; padding: 0; margin: 0; border: 0; background: none; border-radius: 0; }
.defs { position: absolute; width: 0; height: 0; }

/* title, menu, bold tree labels and status share the larger interface face */
.titlebar, .menubar, .status, .row b { font-family: "Noto Sans CJK SC", "Noto Sans", sans-serif; font-size: 13px; }

/* title and menu */
.titlebar { flex: none; height: 18px; display: flex; align-items: center; background: #fff; padding-left: 1px; }
.logo { width: 16px; height: 16px; margin-right: 5px; }
.titlebar h1 { flex: 1; line-height: 18px; }
.winbtns { display: flex; padding-right: 2px; }
.winbtns button { width: 46px; height: 16px; display: flex; justify-content: center; align-items: center; }
.winbtns svg { width: 12px; height: 12px; fill: none; stroke: #000; }
.menubar { flex: none; height: 20px; display: flex; align-items: center; background: #fff; padding-left: 6px; }
.docicon { width: 16px; height: 14px; margin-right: 1px; }
.menubar > button { padding: 0 6px; line-height: 20px; }
.mdibtns { margin-left: auto; display: flex; gap: 1px; padding: 2px 1px 0 0; }
.mdibtns button { width: 18px; height: 18px; border: 1px solid #e0e0e0; display: flex; justify-content: center; align-items: center; }
.mdibtns svg { width: 10px; height: 10px; fill: none; stroke: #708090; }

/* toolbars */
.toolbar { flex: none; height: 31px; display: flex; align-items: center; gap: 10px; padding-left: 1px; }
.group { display: flex; align-items: center; }
.group::before { content: ""; width: 3px; height: 19px; margin-right: 4px; background: repeating-linear-gradient(#000 0 1px, transparent 1px 2px); }
.tb { width: 23px; height: 22px; display: flex; align-items: center; justify-content: center; color: #404040; border: 1px solid transparent; }
.tb svg { width: 16px; height: 16px; flex: none; }
.tb.on { background: #e5f1fb; border-color: #0078d7; }
.tb.off { color: #aaa; }
.tb.green { color: #20d830; }
.tb.pink { color: #e838e0; }
.sep { width: 8px; height: 22px; display: flex; justify-content: center; }
.sep::before { content: ""; width: 1px; background: #b8b8b8; }
.combo { position: relative; width: 50px; height: 19px; background: #fff; border: 2px solid; border-color: #808080 #e0e0e0 #e0e0e0 #808080; }
.combo.wide { width: 98px; margin-right: 2px; }
.combo.mode { width: 79px; }
.combo select { appearance: none; width: 100%; height: 15px; padding-left: 1px; font: 10px/15px "Liberation Mono", monospace; display: block; }
.arrow { position: absolute; right: 0; top: 0; width: 16px; height: 15px; background: #f0f0f0; border: 1px solid; border-color: #f8f8f8 #707070 #707070 #f8f8f8; pointer-events: none; display: flex; align-items: center; justify-content: center; }
.arrow::before { content: ""; border: 4px solid transparent; border-top-color: #000; border-bottom: 0; }

/* work area */
.work { flex: 1; min-height: 0; display: flex; padding-bottom: 4px; }
.side { flex: none; width: 336px; margin-bottom: -4px; padding-right: 3px; margin-right: 3px; border-right: 1px solid #fff; display: grid; grid-template-rows: 380fr 383fr; }
.dock { display: flex; flex-direction: column; min-height: 0; min-width: 0; }
.props { padding: 3px 0 11px; }
.dockhead { flex: none; margin: 0 0 5px 2px; height: 15px; border: 1px solid #a0a0a0; border-radius: 2px; display: flex; align-items: center; gap: 5px; padding: 0 5px 0 2px; font-size: 11px; line-height: 13px; }
.dockhead h2 { flex: 1; }
.dockhead button, .vhead button { width: 8px; height: 8px; display: flex; }
.dockhead svg, .vhead svg { width: 8px; height: 8px; }
.x { stroke: #000; stroke-width: 2; fill: none; }
.frame { flex: 1; min-height: 0; margin: 0 6px 0 8px; padding: 3px 2px 2px; border: solid; border-width: 1px 2px 2px 1px; border-color: #fff #696969 #696969 #fff; display: flex; }
.well { flex: 1; min-width: 0; background: #fff; border: 2px solid; border-color: #808080 #e3e3e3 #e3e3e3 #808080; display: flex; flex-direction: column; }
.tabs { flex: none; display: flex; height: 18px; margin: 0 6px 7px 8px; }
.tabs button { background: #f0f0f0; border: solid #696969; border-width: 0 2px 2px 0; border-radius: 0 0 2px 2px; padding: 0 6px 0 7px; line-height: 18px; margin-top: -2px; height: 20px; }
.tabs .rest { flex: 1; height: 16px; border: solid #696969; border-width: 0 2px 2px 0; }
.props .tabs { margin-bottom: 0; }
.split { flex: none; height: 6px; border-top: 1px solid #fff; border-bottom: 2px solid #787878; }

/* trees */
.tree { padding: 0 0 0 4px; --h: 20px; }
.tree.tall { --h: 22px; }
.tree ul { padding-left: 19px; }
.tree li { position: relative; }
.tree li::before { content: ""; position: absolute; left: 4px; top: 0; bottom: 0; width: 1px; background: repeating-linear-gradient(#808080 0 1px, transparent 1px 2px); }
.tree > li:first-child::before { top: 10px; }
.tree li:last-child::before { bottom: auto; height: calc(var(--h) / 2); }
.tree > li:only-child::before { display: none; }
.row { position: relative; display: flex; align-items: center; height: var(--h); line-height: var(--h); white-space: nowrap; }
.row::before { content: ""; position: absolute; left: 4px; top: 50%; width: 12px; height: 1px; background: repeating-linear-gradient(90deg, #808080 0 1px, transparent 1px 2px); }
.row svg { width: 16px; height: 16px; margin: 0 3px 0 6px; flex: none; z-index: 1; }
.row.leaf svg { margin-left: 15px; }
.row b, .row span { padding: 0 2px; }
.row b { font-weight: bold; }
.sel { background: #f0f0f0; }
.exp { position: relative; width: 9px; height: 9px; border: 1px solid #808080; background: linear-gradient(#000, #000) 1px 3px / 5px 1px no-repeat #fff; }
.exp.plus { background: linear-gradient(#000, #000) 1px 3px / 5px 1px no-repeat, linear-gradient(#000, #000) 3px 1px / 1px 5px no-repeat #fff; }

/* properties grid */
.tablebox { flex: 1; overflow: hidden; }
table { width: 100%; table-layout: fixed; border-collapse: separate; border-spacing: 0; }
.c1 { width: 116px; } .c2 { width: 132px; } .c3 { width: 44px; }
th { height: 20px; padding: 0; font-weight: normal; line-height: 17px; background: #f0f0f0; border: solid; border-width: 1px 1px 2px 1px; border-color: #e0e0e0 #808080 #808080 #fff; white-space: nowrap; }
.last { text-align: left; border-right: 0; }
td { height: 20px; padding: 0 0 0 2px; line-height: 19px; border: solid #c0c0c0; border-width: 0 1px 1px 0; white-space: nowrap; }
input[type="checkbox"] { appearance: none; display: block; margin: 0 auto; width: 15px; height: 15px; background: #fff; border: 2px solid; border-color: #808080 #e3e3e3 #e3e3e3 #808080; position: relative; }
input:checked::before { content: ""; position: absolute; left: 3px; top: 0; width: 4px; height: 8px; border: solid #000; border-width: 0 2px 2px 0; transform: rotate(42deg); }
.swatch { display: block; width: 120px; height: 12px; margin-left: 4px; background: #8484c0; border: 1px solid #000; }
.value { display: block; width: 128px; height: 16px; line-height: 13px; background: #f0f0f0; border: solid; border-width: 1px 2px 2px 1px; border-color: #e3e3e3 #696969 #696969 #e3e3e3; }
.hscroll { flex: none; height: 15px; display: flex; background: #f0f0f0; }
.hscroll button { width: 17px; display: flex; align-items: center; justify-content: center; }
.hscroll svg { width: 7px; height: 9px; fill: none; stroke: #505050; stroke-width: 2; }
.track { flex: 1; }
.thumb { width: 81%; height: 15px; background: #cdcdcd; }

/* model tree and view */
.pane { background: #fff; border: 2px solid; border-color: #696969 #e8e8e8 #e8e8e8 #696969; min-width: 0; }
.model { flex: none; width: 288px; margin-right: 4px; }
.view { flex: 1; margin-right: 1px; display: flex; }
#scene { flex: 1; min-width: 0; width: 100%; height: 100%; }
.scale { font: 12px "Liberation Sans", Arial, sans-serif; }

/* bottom docks */
.docks { flex: none; height: 152px; display: flex; border-top: 2px solid #787878; border-bottom: 1px solid #a0a0a0; }
.strip { flex: 961 1 0; display: flex; padding: 3px 8px 2px 1px; min-width: 0; }
.strip.second { flex: 958 1 0; border-left: 1px solid #696969; padding-right: 4px; }
.vhead { flex: none; width: 15px; margin-right: 1px; border: 1px solid #a0a0a0; border-radius: 2px; display: flex; flex-direction: column; align-items: center; gap: 5px; padding: 3px 0; }
.vhead h2 { writing-mode: vertical-rl; transform: rotate(180deg); margin-top: auto; font: 9px/13px "DejaVu Sans", sans-serif; }
.log { flex: 1; background: #fff; border: 2px solid; border-color: #696969 #e3e3e3 #e3e3e3 #696969; }
.log.thin { border: 1px solid #828790; }

.status { flex: none; height: 22px; display: flex; gap: 3px; border-top: 1px solid #fff; padding: 4px 0 1px 1px; line-height: 17px; }
.msg { flex: 1; }
.cell { border: 1px solid; border-color: #a0a0a0 #fff #fff #a0a0a0; text-align: center; line-height: 15px; }
.s1 { width: 28px; } .s2 { width: 37px; } .s3 { width: 35px; }
```
FILE: grid.js
```js
// Fills the drawing plane with grid lines, every fifth one heavier.
(function () {
  const step = 27.2, cx = 1275, cy = 480;
  const left = 649, right = 1901, top = 126, bottom = 834;
  const g = document.getElementById('grid');
  const add = (x, y, w, h) => {
    const r = document.createElementNS('http://www.w3.org/2000/svg', 'rect');
    r.setAttribute('x', x); r.setAttribute('y', y);
    r.setAttribute('width', w); r.setAttribute('height', h);
    r.setAttribute('fill', '#e0e0e0');
    g.appendChild(r);
  };
  // A heavy line is two pixels wide and straddles its coordinate.
  const place = (centre, n) => Math.floor(centre + n * step) - (n % 5 ? 0 : 1);
  for (let i = -23; i <= 23; i++) {
    add(place(cx, i), top, i % 5 ? 1 : 2, bottom - top);
  }
  for (let j = -13; j <= 13; j++) {
    add(left, place(cy, j), right - left, j % 5 ? 1 : 2);
  }
})();
```
